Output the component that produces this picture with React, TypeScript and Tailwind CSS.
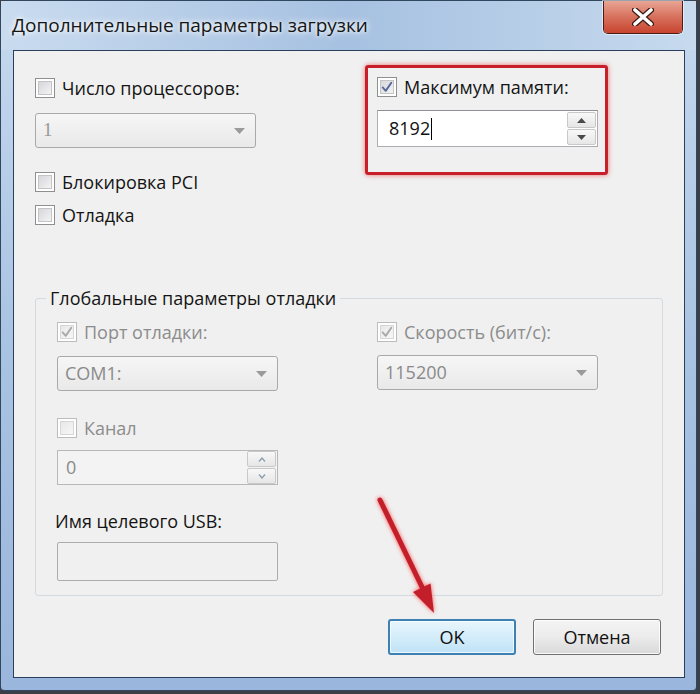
import React from "react";

function Check({ checked, disabled }: { checked?: boolean; disabled?: boolean }) {
  return (
    <span
      className={`flex h-[20px] w-[20px] shrink-0 border bg-white p-[2px] ${
        disabled ? "border-[#bcbcbc]" : "border-[#8e8f8f]"
      }`}
    >
      <span
        className={`flex h-full w-full items-center justify-center border bg-gradient-to-br ${
          disabled ? "border-[#d6d6d6] from-[#e8e8e8] to-[#f7f7f7]" : "border-[#c4c4c4] from-[#d6d6dc] to-[#f4f4f4]"
        }`}
      >
        {checked && (
          <svg width="14" height="14" viewBox="0 0 14 14">
            <path
              d="M2 7.5 L5.5 11.5 L12 2"
              fill="none"
              stroke={disabled ? "#a9a9a9" : "#56679a"}
              strokeWidth="2.2"
              strokeLinecap="round"
              strokeLinejoin="round"
            />
          </svg>
        )}
      </span>
    </span>
  );
}

function CheckRow({
  label,
  checked,
  disabled,
  className = "",
}: {
  label: string;
  checked?: boolean;
  disabled?: boolean;
  className?: string;
}) {
  return (
    <div className={`flex h-[20px] items-center gap-[7px] ${className}`}>
      <Check checked={checked} disabled={disabled} />
      <span className={`whitespace-nowrap leading-[20px] ${disabled ? "text-[#8c8c8c]" : "text-[#141414]"}`}>
        {label}
      </span>
    </div>
  );
}

function Combo({ value, serif, className = "" }: { value: string; serif?: boolean; className?: string }) {
  return (
    <div
      className={`flex h-[35px] w-[221px] items-center justify-between rounded-[3px] border border-[#a9a9a9] bg-gradient-to-b from-[#f6f6f6] to-[#e9e9e9] pl-[7px] pr-[10px] text-[#8a8a8a] ${className}`}
    >
      <span className={serif ? "font-['Liberation_Serif',serif] text-[19px] text-[#999]" : ""}>{value}</span>
      <svg width="11" height="6" viewBox="0 0 11 6">
        <path d="M0 0 H11 L5.5 6 Z" fill="#9a9a9a" />
      </svg>
    </div>
  );
}

function SpinButton({ up, disabled }: { up?: boolean; disabled?: boolean }) {
  return (
    <div className="flex h-[16px] w-[29px] items-center justify-center rounded-[2px] border border-[#c8c8c8] bg-gradient-to-b from-[#f8f8f8] to-[#e6e6e6]">
      {disabled ? (
        <svg width="8" height="5" viewBox="0 0 8 5">
          <path d={up ? "M1 4.5 L4 1 L7 4.5" : "M1 0.5 L4 4 L7 0.5"} fill="none" stroke="#8a9ab0" strokeWidth="1.2" />
        </svg>
      ) : (
        <svg width="9" height="5" viewBox="0 0 9 5">
          <path d={up ? "M0 5 H9 L4.5 0 Z" : "M0 0 H9 L4.5 5 Z"} fill="#4a4a4a" />
        </svg>
      )}
    </div>
  );
}

export default function App() {
  return (
    <div className="h-[694px] w-[700px] overflow-hidden bg-[#3b4048] font-['Open_Sans',sans-serif] text-[18px]">
      <div className="h-[691px] w-[697px] rounded-t-[8px] rounded-b-[4px] border border-[#31465f] bg-gradient-to-b from-[#c6d9ee] via-[#a9c3e2] to-[#9ab6dc]">
        {/* title bar */}
        <div className="flex h-[49px] bg-gradient-to-r from-[#c9dbef] via-[#a6c1e1] to-[#c7daee] pl-[11px] pr-[13px]">
          <div className="pt-[11px] text-[19px] leading-[26px] text-[#151515] [text-shadow:0_0_8px_#ffffff,0_0_4px_#ffffff]">
            Дополнительные параметры загрузки
          </div>
          <div className="ml-auto flex h-[33px] w-[80px] flex-col overflow-hidden rounded-b-[5px] border border-t-0 border-[#4a1e17] shadow-[0_0_0_1px_rgba(255,255,255,0.5)]">
            <div className="flex h-full w-full items-center justify-center bg-gradient-to-b from-[#e9a595] via-[#d6705c] to-[#c8432f]">
              <svg width="22" height="18" viewBox="0 0 22 18">
                <path d="M3 2 L19 16 M19 2 L3 16" stroke="#3a1a12" strokeWidth="6" strokeLinecap="round" />
                <path d="M3 2 L19 16 M19 2 L3 16" stroke="#ffffff" strokeWidth="3.6" strokeLinecap="round" />
              </svg>
            </div>
          </div>
        </div>

        {/* client area */}
        <div className="relative ml-[12px] h-[628px] w-[672px] border border-[#2a3f5c] bg-[#f0f0f0] pl-[21px] pt-[14px]">
          <div className="flex">
            <div className="w-[330px] pt-[13px]">
              <CheckRow label="Число процессоров:" />
              <Combo className="mt-[15px] w-[220px]" value="1" serif />
              <CheckRow className="mt-[24px]" label="Блокировка PCI" />
              <CheckRow className="mt-[13px]" label="Отладка" />
            </div>
            <div className="h-[110px] w-[243px] rounded-[3px] border-[3px] border-[#c8202b] pl-[9px] pr-[7px] pt-[9px] shadow-[0_0_5px_rgba(230,60,60,0.7)]">
              <CheckRow label="Максимум памяти:" checked />
              <div className="mt-[13px] flex h-[37px] w-[221px] items-center justify-between border border-[#abadb3] border-t-[#8c8f96] bg-white pl-[11px] pr-[1px]">
                <div className="flex items-center text-[#111]">
                  <span>8192</span>
                  <span className="ml-[1px] h-[22px] w-[1px] bg-black" />
                </div>
                <div className="flex flex-col gap-[1px]">
                  <SpinButton up />
                  <SpinButton />
                </div>
              </div>
            </div>
          </div>

          <fieldset className="mt-[61px] w-[628px] rounded-[3px] border border-[#d3dbe0] pb-[14px]">
            <legend className="ml-[10px] px-[4px] leading-[24px] text-[#141414]">Глобальные параметры отладки</legend>
            <div className="flex pl-[21px] pt-[12px]">
              <div className="w-[320px]">
                <CheckRow label="Порт отладки:" checked disabled />
                <Combo className="mt-[14px]" value="COM1:" />
                <CheckRow className="mt-[27px]" label="Канал" disabled />
                <div className="mt-[12px] flex h-[35px] w-[221px] items-center justify-between border border-[#b8b8b8] bg-[#f3f3f3] pl-[8px] pr-[1px] text-[#8a8a8a]">
                  <span>0</span>
                  <div className="flex flex-col gap-[1px]">
                    <SpinButton up disabled />
                    <SpinButton disabled />
                  </div>
                </div>
                <div className="ml-[-2px] mt-[26px] leading-[20px] text-[#141414]">Имя целевого USB:</div>
                <div className="mt-[11px] h-[39px] w-[221px] rounded-[2px] border border-[#acacac] bg-[#f0f0f0]" />
              </div>
              <div>
                <CheckRow label="Скорость (бит/с):" checked disabled />
                <Combo className="mt-[13px]" value="115200" />
              </div>
            </div>
          </fieldset>

          <div className="mt-[23px] flex justify-end gap-[17px] pr-[23px]">
            <button className="flex h-[36px] w-[128px] items-center justify-center rounded-[3px] border-2 border-[#3d80b4] bg-gradient-to-b from-[#e8f6fd] to-[#bfe3f6] text-[#111] shadow-[inset_0_0_0_1px_rgba(255,255,255,0.7)]">
              OK
            </button>
            <button className="flex h-[36px] w-[128px] items-center justify-center rounded-[3px] border border-[#707070] bg-gradient-to-b from-[#f4f4f4] via-[#ebebeb] to-[#d9d9d9] text-[#111] shadow-[inset_0_0_0_1px_rgba(255,255,255,0.8)]">
              Отмена
            </button>
          </div>

          {/* annotation arrow */}
          <svg className="pointer-events-none absolute left-[355px] top-[440px]" width="80" height="130" viewBox="0 0 80 130">
            <g style={{ filter: "drop-shadow(0 0 2px rgba(255,40,40,0.8))" }}>
              <line x1="11" y1="9" x2="53" y2="96" stroke="#c21f2a" strokeWidth="5" strokeLinecap="round" />
              <path d="M61.5 92.5 L44 101 L65 122 Z" fill="#c21f2a" />
            </g>
          </svg>
        </div>
      </div>
    </div>
  );
}
